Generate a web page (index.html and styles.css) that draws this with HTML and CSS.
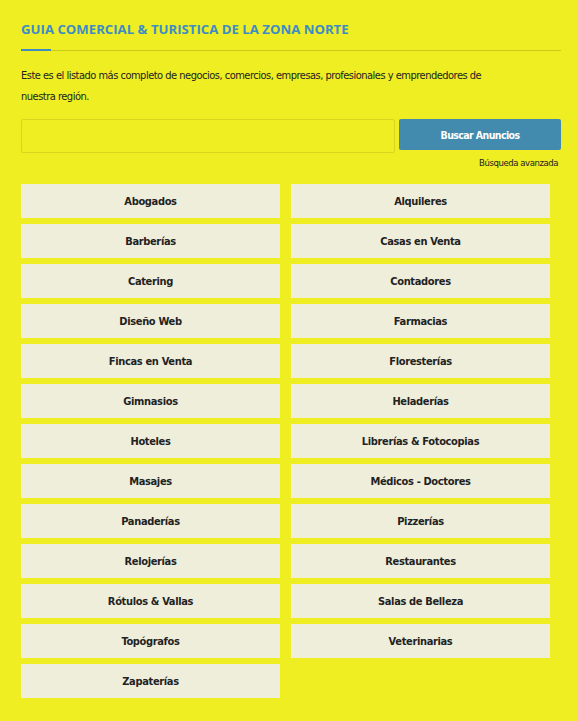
FILE: index.html
```html
<!DOCTYPE html>
<html lang="es">
<head>
<meta charset="utf-8">
<title>Guia Comercial</title>
<link rel="stylesheet" href="styles.css">
</head>
<body>
<main class="page">
  <h2 class="title">GUIA COMERCIAL &amp; TURISTICA DE LA ZONA NORTE</h2>
  <div class="rule"><span class="rule-accent"></span></div>
  <p class="intro">Este es el listado más completo de negocios, comercios, empresas, profesionales y emprendedores de nuestra región.</p>
  <form class="search">
    <input class="search-input" type="text">
    <button class="search-btn" type="button">Buscar Anuncios</button>
  </form>
  <div class="advanced"><a href="#">Búsqueda avanzada</a></div>
  <ul class="cats">
    <li><a href="#">Abogados</a></li>
    <li><a href="#">Alquileres</a></li>
    <li><a href="#">Barberías</a></li>
    <li><a href="#">Casas en Venta</a></li>
    <li><a href="#">Catering</a></li>
    <li><a href="#">Contadores</a></li>
    <li><a href="#">Diseño Web</a></li>
    <li><a href="#">Farmacias</a></li>
    <li><a href="#">Fincas en Venta</a></li>
    <li><a href="#">Floresterías</a></li>
    <li><a href="#">Gimnasios</a></li>
    <li><a href="#">Heladerías</a></li>
    <li><a href="#">Hoteles</a></li>
    <li><a href="#">Librerías &amp; Fotocopias</a></li>
    <li><a href="#">Masajes</a></li>
    <li><a href="#">Médicos - Doctores</a></li>
    <li><a href="#">Panaderías</a></li>
    <li><a href="#">Pizzerías</a></li>
    <li><a href="#">Relojerías</a></li>
    <li><a href="#">Restaurantes</a></li>
    <li><a href="#">Rótulos &amp; Vallas</a></li>
    <li><a href="#">Salas de Belleza</a></li>
    <li><a href="#">Topógrafos</a></li>
    <li><a href="#">Veterinarias</a></li>
    <li><a href="#">Zapaterías</a></li>
  </ul>
</main>
</body>
</html>
```

FILE: styles.css
```css
html, body {
  margin: 0;
  padding: 0;
  background: #eeee22;
}
body {
  font-family: "DejaVu Sans Condensed", "DejaVu Sans", sans-serif;
  color: #1e1e1e;
}
.page {
  padding: 20px 16px 20px 21px;
}
.title {
  margin: 0;
  font-family: "Open Sans", sans-serif;
  font-weight: 700;
  font-size: 13.2px;
  line-height: 18px;
  color: #3d8cc4;
}
.rule {
  margin-top: 12px;
  height: 1px;
  background: #c9c91a;
  position: relative;
}
.rule-accent {
  position: absolute;
  left: 0;
  top: -1px;
  width: 30px;
  height: 2px;
  background: #3d8cc4;
}
.intro {
  margin: 14px 0 0;
  max-width: 475px;
  font-size: 11px;
  letter-spacing: -0.5px;
  line-height: 21px;
  color: #222;
}
.search {
  display: flex;
  gap: 4px;
  margin-top: 12px;
  align-items: flex-start;
}
.search-input {
  flex: 1;
  height: 34px;
  box-sizing: border-box;
  border: 1px solid #d6d61e;
  background: #eeee22;
  border-radius: 2px;
  margin: 0;
}
.search-btn {
  width: 162px;
  height: 31px;
  border: 0;
  border-radius: 2px;
  background: #428bae;
  color: #fff;
  font-family: "DejaVu Sans Condensed", "DejaVu Sans", sans-serif;
  font-weight: 700;
  font-size: 10.5px;
  letter-spacing: -0.6px;
  margin: 0;
}
.advanced {
  text-align: right;
  padding-right: 3px;
  margin-top: 3px;
  font-size: 9.5px;
  letter-spacing: -0.45px;
  line-height: 14px;
}
.advanced a {
  color: #222;
  text-decoration: none;
}
.cats {
  list-style: none;
  margin: 14px 0 0;
  padding: 0;
  display: grid;
  grid-template-columns: 259px 259px;
  column-gap: 11px;
  row-gap: 6px;
}
.cats li {
  background: #efeedb;
  height: 34px;
  display: flex;
  align-items: center;
  justify-content: center;
}
.cats a {
  color: #222;
  text-decoration: none;
  font-weight: 700;
  font-size: 11px;
  letter-spacing: -0.35px;
}
```
